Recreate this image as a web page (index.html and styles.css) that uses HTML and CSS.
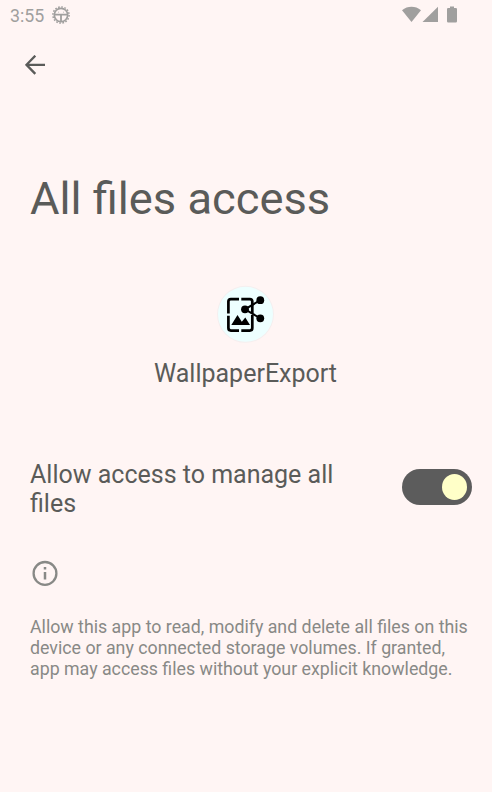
FILE: index.html
```html
<!DOCTYPE html>
<html lang="en">
<head>
<meta charset="utf-8">
<title>All files access</title>
<link rel="stylesheet" href="styles.css">
</head>
<body>
<header class="status">
  <span class="clock">3:55</span>
  <svg class="gear" width="20" height="20" viewBox="0 0 20 20" fill="none" stroke="#a09f9e">
    <circle cx="10" cy="10" r="8.100" stroke-width="1.500" stroke-dasharray="1.700 1.480"/>
    <circle cx="10" cy="10" r="6.700" stroke-width="1.700"/>
    <path d="M3.500 9.700h13M10 9.700v6.500" stroke-width="1.800"/>
    <path d="M7 7.200h1M12 7.200h1" stroke-width=".6"/>
  </svg>
  <svg class="signals" width="56" height="18" viewBox="0 0 56 18" fill="#a09f9e">
    <path d="M0 4.200C5.600-.4 13.400-.4 19 4.200L9.500 16z"/>
    <path d="M36 .7V16H20.500z"/>
    <path d="M48 .6h4v1.300h1.800q1.200 0 1.200 1.200v12.100q0 1.200-1.200 1.200h-7.600q-1.200 0-1.200-1.200V3.100q0-1.200 1.200-1.200H48z"/>
  </svg>
</header>
<nav class="toolbar">
  <svg width="20" height="20" viewBox="0 0 20 20" fill="none" stroke="#5a5b59" stroke-width="2.300"><path d="M20 9.800H1.700M10.300 .7L1.500 9.800l8.800 9.100"/></svg>
</nav>
<main>
  <h1>All files access</h1>
  <section class="app">
    <svg width="58" height="58" viewBox="0 0 58 58">
      <circle cx="28.500" cy="29.300" r="28.500" fill="#f5efef"/>
      <circle cx="28.500" cy="29.300" r="27.500" fill="#edffff"/>
      <g fill="none" stroke="#000" stroke-width="2.700">
        <path d="M11.400 28.500V16.600q0-2.500 2.500-2.500H22M24.300 14.100h8.500q2.500 0 2.500 2.500V28M11.400 30.700v12.400q0 2.500 2.500 2.500H22M24.300 45.600h8.500q2.500 0 2.500-2.500V30"/>
        <path d="M43.300 33.300L28 24.300l15.300-9.100" stroke-width="2"/>
      </g>
      <path d="M14.300 39.900L20.500 30l4.300 6.700 3.500-4.300 4.700 7.500z"/>
      <circle cx="28" cy="24.300" r="3.900"/><circle cx="43.300" cy="15.200" r="3.900"/><circle cx="43.300" cy="33.300" r="3.900"/>
    </svg>
    <p class="name">WallpaperExport</p>
  </section>
  <section class="setting">
    <p class="label">Allow access to manage all files</p>
    <span class="switch"><span class="thumb"></span></span>
  </section>
  <section class="info">
    <svg width="26" height="26" viewBox="0 0 26 26" fill="none" stroke="#888986" stroke-width="2.300"><circle cx="13" cy="13.400" r="11.400"/><path d="M13 12.100v7.300M13 7.100v2.500" stroke-width="2.500"/></svg>
    <p>Allow this app to read, modify and delete all files on this<br>device or any connected storage volumes. If granted,<br>app may access files without your explicit knowledge.</p>
  </section>
</main>
</body>
</html>
```
FILE: styles.css
```css
* { box-sizing: border-box; }
body {
  margin: 0;
  height: 792px;
  overflow: hidden;
  background: #fff5f4;
  color: #5a5b59;
  font-family: Roboto, sans-serif;
}
h1, p { margin: 0; font-weight: 400; }
svg { display: block; flex: none; }
.status {
  display: flex;
  align-items: center;
  height: 30px;
  padding: 0 34px 0 10px;
  color: #a09f9e;
}
.clock { width: 41px; font-size: 17.800px; line-height: 21px; white-space: nowrap; }
.signals { margin-left: auto; }
.toolbar { height: 143px; padding: 25px; }
h1 { padding-left: 30px; font-size: 45.250px; line-height: 52px; }
.app {
  display: flex;
  flex-direction: column;
  align-items: center;
  padding-top: 60px;
}
.name, .label { font-size: 25px; line-height: 29px; }
.name { margin: 16px 1px 0 0; }
.setting {
  display: flex;
  align-items: center;
  justify-content: space-between;
  margin-top: 72px;
  padding: 0 20px 0 30px;
}
.label { width: 320px; }
.switch {
  display: flex;
  align-items: center;
  justify-content: flex-end;
  width: 70px;
  height: 36px;
  margin-top: -4px;
  padding-right: 5px;
  border-radius: 18px;
  background: #5c5c5c;
}
.thumb { width: 25px; height: 26px; border-radius: 50%; background: #ffffc8; }
.info { padding: 42px 0 0 30px; color: #888986; }
.info svg { margin-left: 2px; }
.info p { margin-top: 31px; font-size: 17.780px; line-height: 21px; white-space: nowrap; }
```
